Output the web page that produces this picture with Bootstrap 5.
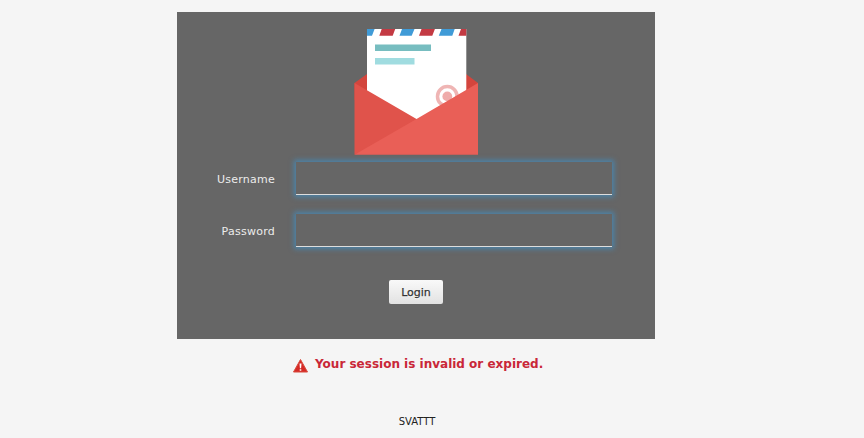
<!DOCTYPE html>
<html lang="en">
<head>
<meta charset="utf-8">
<meta name="viewport" content="width=device-width, initial-scale=1">
<title>Login</title>
<link href="https://cdn.jsdelivr.net/npm/bootstrap@5.3.0/dist/css/bootstrap.min.css" rel="stylesheet">
<style>
body{background:#f5f5f5;font:11px/16px "DejaVu Sans",sans-serif;color:#222;overflow:hidden}
.login-wrap{width:478px;margin:12px 0 0 177px}
.login-box{height:327px;background:#666;padding-top:15px}
.mail-logo{display:block;width:128px;height:131px;margin:0 0 4px 175px}
.login-row{height:33px;padding-left:20px}
.login-row+.login-row{margin-top:19px}
.login-row label{width:78px;padding-top:2px;color:#ececec;letter-spacing:.25px}
.login-input{width:316px;height:33px;margin-left:21px;background:#666;border:0;border-bottom:1px solid #ddd;border-radius:0;color:#eee;box-shadow:0 0 5px 2px rgba(71,135,177,.9)}
.login-input:focus{background:#666;box-shadow:0 0 5px 2px rgba(71,135,177,1)}
.login-btn{width:54px;height:24px;padding:1px 0 0;margin-top:33px;border:0;border-radius:2px;font-size:11px;line-height:23px;color:#333;background:linear-gradient(#f9f9f9,#e2e2e2);text-shadow:0 1px 1px #fff;-webkit-text-stroke:.25px #333}
.session-msg{height:20px;margin-top:15px;padding-left:116px;font-size:12px;line-height:20px;color:#c92738}
.session-msg svg{margin:4px 7px 0 0}
.product-name{font-size:10px;margin-top:40px;padding-left:2px}
</style>
<script src="https://cdn.jsdelivr.net/npm/bootstrap@5.3.0/dist/js/bootstrap.bundle.min.js"></script>
</head>
<body>
<main class="login-wrap">
  <form class="login-box">
    <svg class="mail-logo" viewBox="352 27 128 131" aria-hidden="true">
      <path d="M354.500 83L367 74H466L478 83V100H354.500Z" fill="#d3453d"/>
      <path d="M367 29H466.300V104L416.500 131L367 103Z" fill="#fff"/>
      <path d="M367 29H374.600L372 35.700H367ZM402 29H414.500L411.700 35.700H399.500ZM441.500 29H454.700L452.300 35.700H438.800Z" fill="#409bd7"/>
      <path d="M381.700 29H395.200L392.700 35.700H379.300ZM421.500 29H434.900L432.300 35.700H419ZM461 29H466.300V35.700H458.500Z" fill="#c33a43"/>
      <path d="M375 44.500H431V51H375Z" fill="#77bdc0"/>
      <path d="M375 58H414.500V64.500H375Z" fill="#a0dce0"/>
      <circle cx="447.300" cy="96.400" r="9.800" fill="none" stroke="#efb5b4" stroke-width="3.500"/>
      <circle cx="447.300" cy="96.400" r="4.900" fill="#efabaa"/>
      <path d="M354.500 83L416.500 119L430 126L354.500 154.700Z" fill="#e0534b"/>
      <path d="M478 83V154.700H354.500L416.500 119Z" fill="#e95f57"/>
    </svg>
    <div class="login-row d-flex align-items-center">
      <label class="text-end" for="user">Username</label>
      <input class="form-control login-input" id="user" type="text">
    </div>
    <div class="login-row d-flex align-items-center">
      <label class="text-end" for="password">Password</label>
      <input class="form-control login-input" id="password" type="password">
    </div>
    <button class="btn login-btn d-block mx-auto" type="button">Login</button>
  </form>
  <div class="session-msg d-flex fw-bold">
    <svg width="15" height="16" viewBox="0 0 15 16" aria-hidden="true"><path d="M7.500 1.500L14.500 14H.5Z" fill="#d52a26" stroke="#d84a3c" stroke-linejoin="round"/><path d="M6.500 5.500H8.500L8.100 10.200H6.900ZM6.700 11.200H8.300V12.800H6.700Z" fill="#fff"/></svg>
    <span>Your session is invalid or expired.</span>
  </div>
  <div class="product-name text-center">SVATTT</div>
</main>
</body>
</html>
